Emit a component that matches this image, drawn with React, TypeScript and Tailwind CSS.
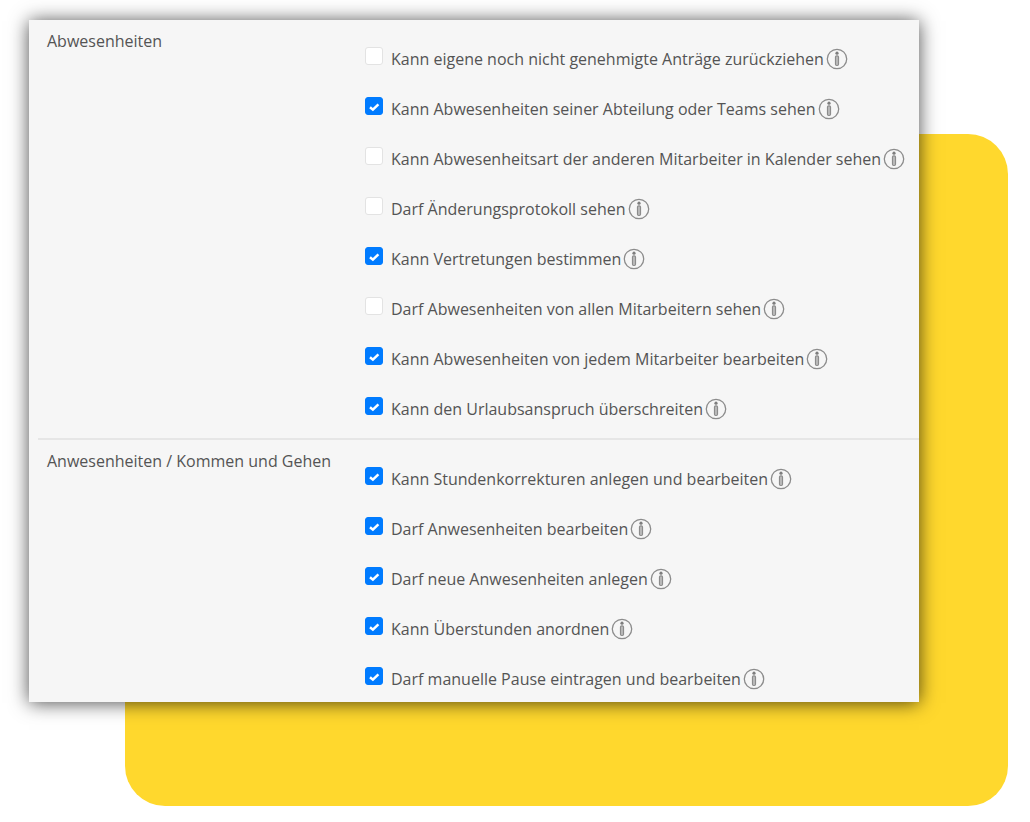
import React, { useState } from "react";

interface Permission {
  id: string;
  label: string;
  checked: boolean;
}

interface PermissionGroup {
  title: string;
  permissions: Permission[];
}

const groups: PermissionGroup[] = [
  {
    title: "Abwesenheiten",
    permissions: [
      { id: "withdraw-own", label: "Kann eigene noch nicht genehmigte Anträge zurückziehen", checked: false },
      { id: "see-team", label: "Kann Abwesenheiten seiner Abteilung oder Teams sehen", checked: true },
      { id: "see-type", label: "Kann Abwesenheitsart der anderen Mitarbeiter in Kalender sehen", checked: false },
      { id: "see-log", label: "Darf Änderungsprotokoll sehen", checked: false },
      { id: "set-substitute", label: "Kann Vertretungen bestimmen", checked: true },
      { id: "see-all", label: "Darf Abwesenheiten von allen Mitarbeitern sehen", checked: false },
      { id: "edit-all", label: "Kann Abwesenheiten von jedem Mitarbeiter bearbeiten", checked: true },
      { id: "exceed-leave", label: "Kann den Urlaubsanspruch überschreiten", checked: true },
    ],
  },
  {
    title: "Anwesenheiten / Kommen und Gehen",
    permissions: [
      { id: "hour-corrections", label: "Kann Stundenkorrekturen anlegen und bearbeiten", checked: true },
      { id: "edit-attendance", label: "Darf Anwesenheiten bearbeiten", checked: true },
      { id: "new-attendance", label: "Darf neue Anwesenheiten anlegen", checked: true },
      { id: "order-overtime", label: "Kann Überstunden anordnen", checked: true },
      { id: "manual-break", label: "Darf manuelle Pause eintragen und bearbeiten", checked: true },
    ],
  },
];

function InfoIcon() {
  return (
    <svg viewBox="0 0 22 22" className="size-[22px]" fill="none" stroke="#8c8c8c" aria-hidden="true">
      <circle cx="11" cy="11" r="9.7" strokeWidth="1.3" />
      <circle cx="11" cy="5.2" r="1.6" fill="#7d7d7d" stroke="none" />
      <rect x="9.5" y="7.9" width="3" height="9.6" rx="1.2" fill="#bdbdbd" strokeWidth="1.2" />
    </svg>
  );
}

function PermissionRow({ permission }: { permission: Permission }) {
  const [checked, setChecked] = useState(permission.checked);

  return (
    <li className="flex h-[26px] items-center">
      <span className="mb-1.5 grid size-[18px] shrink-0">
        <input
          id={permission.id}
          type="checkbox"
          checked={checked}
          onChange={(e) => setChecked(e.target.checked)}
          className="peer col-start-1 row-start-1 size-[18px] appearance-none rounded-[3px] border border-[#e3e3e3] bg-white checked:border-[#007bff] checked:bg-[#007bff]"
        />
        <svg
          viewBox="0 0 18 18"
          className="pointer-events-none invisible col-start-1 row-start-1 size-[18px] peer-checked:visible"
          fill="none"
          stroke="#fff"
          strokeWidth="2.5"
          aria-hidden="true"
        >
          <path d="M5 10.2 L7.9 12.6 L13.4 7.4" />
        </svg>
      </span>
      <label htmlFor={permission.id} className="ml-2 whitespace-nowrap">
        {permission.label}
      </label>
      <button type="button" aria-label="Information" className="ml-0.5 shrink-0">
        <InfoIcon />
      </button>
    </li>
  );
}

export default function App() {
  return (
    <main className="grid bg-white pt-5 pr-[22px] pb-4 pl-[29px] font-['Open_Sans','Noto_Sans',sans-serif] text-[16px] leading-[26px] text-[#545454]">
      <div className="col-start-1 row-start-1 mt-[114px] ml-24 rounded-[40px] bg-[#ffd82d]" />
      <div className="col-start-1 row-start-1 mr-[89px] mb-[104px] bg-[#f6f6f6] pl-[9px] shadow-[0_1px_18px_rgba(0,0,0,0.7)]">
        {groups.map((group) => (
          <section
            key={group.title}
            className="grid grid-cols-[318px_1fr] border-b-2 border-[#e6e6e6] pt-[26px] pb-4 pl-[9px] last:border-b-0 last:pb-2.5"
          >
            <h2 className="-mt-[18px]">{group.title}</h2>
            <ul className="flex flex-col gap-6">
              {group.permissions.map((permission) => (
                <PermissionRow key={permission.id} permission={permission} />
              ))}
            </ul>
          </section>
        ))}
      </div>
    </main>
  );
}
